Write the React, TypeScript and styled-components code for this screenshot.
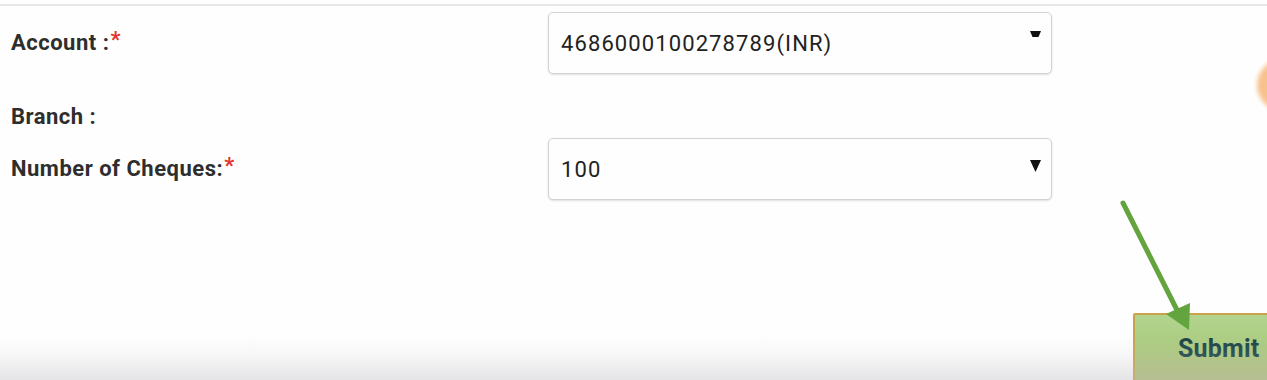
import React from "react";
import styled, { createGlobalStyle } from "styled-components";

const Global = createGlobalStyle`
  html, body { margin: 0; padding: 0; background: #fefefe; }
  body { font-family: Roboto, "Liberation Sans", Arial, sans-serif; }
`;

const Page = styled.div`
  position: relative;
  width: 1267px;
  height: 380px;
  overflow: hidden;
  background: #fefefe;
`;

const TopRule = styled.div`
  margin-top: 4px;
  height: 2px;
  background: #e7e7e9;
`;

const Form = styled.div`
  display: grid;
  grid-template-columns: 537px 504px;
  padding-left: 11px;
  margin-top: 6px;
`;

const Row = styled.div`
  display: contents;
`;

const Label = styled.div<{ $pad?: string }>`
  display: flex;
  align-items: center;
  font-size: 22px;
  letter-spacing: 0.5px;
  font-weight: 700;
  color: #2e2e2e;
  line-height: 22px;
  padding: ${(p) => p.$pad || "0"};
`;

const Star = styled.span`
  color: #e3342f;
  font-weight: 700;
  margin-left: 1px;
  position: relative;
  top: -3px;
`;

const Select = styled.div`
  position: relative;
  height: 62px;
  box-sizing: border-box;
  border: 1px solid #d2d2d4;
  border-radius: 5px;
  box-shadow: 0 1px 2px rgba(0, 0, 0, 0.12);
  background: #fefefe;
  display: flex;
  align-items: center;
  padding-left: 12px;
  font-size: 22px;
  letter-spacing: 1.1px;
  color: #222;
`;

const Caret = styled.svg<{ $top: number }>`
  position: absolute;
  right: 10px;
  top: ${(p) => p.$top}px;
`;

const Spacer = styled.div``;

const Footer = styled.div`
  display: flex;
  justify-content: flex-end;
  margin-top: 113px;
  margin-right: -30px;
`;

const SubmitButton = styled.button`
  width: 164px;
  height: 90px;
  box-sizing: border-box;
  border: 2px solid #caa24c;
  border-radius: 2px;
  background: linear-gradient(180deg, #b2d48e 0%, #abcb80 35%, #b5b66a 100%);
  color: #1b4447;
  font-family: Roboto, "Liberation Sans", Arial, sans-serif;
  font-size: 25px;
  font-weight: 700;
  letter-spacing: 0.2px;
  text-align: left;
  padding: 0 0 18px 43px;
  line-height: 30px;
  cursor: pointer;
`;

const Annotation = styled.svg`
  position: absolute;
  left: 0;
  top: 0;
  pointer-events: none;
`;

const OrangeBlob = styled.div`
  position: absolute;
  left: 1257px;
  top: 58px;
  width: 56px;
  height: 54px;
  border-radius: 50%;
  background: #f8c28c;
  filter: blur(2px);
`;

const BottomShade = styled.div`
  position: absolute;
  left: 0;
  right: 0;
  bottom: 0;
  height: 44px;
  background: linear-gradient(
    180deg,
    rgba(200, 200, 205, 0) 0%,
    rgba(200, 200, 205, 0.12) 40%,
    rgba(190, 190, 195, 0.4) 100%
  );
  pointer-events: none;
`;

export default function App() {
  return (
    <>
      <Global />
      <Page>
        <TopRule />
        <Form>
          <Row>
            <Label>
              Account :<Star>*</Star>
            </Label>
            <Select>
              4686000100278789(INR)
              <Caret $top={18} width="11" height="7" viewBox="0 0 11 7">
                <polygon points="0,0 11,0 8.5,6 2.5,6" fill="#111" />
              </Caret>
            </Select>
          </Row>
          <Row>
            <Label $pad="32px 0 10px">Branch :</Label>
            <Spacer />
          </Row>
          <Row>
            <Label>
              Number of Cheques:<Star>*</Star>
            </Label>
            <Select>
              100
              <Caret $top={21} width="11" height="12" viewBox="0 0 11 12">
                <polygon points="0,0 11,0 5.5,12" fill="#111" />
              </Caret>
            </Select>
          </Row>
        </Form>
        <Footer>
          <SubmitButton>Submit</SubmitButton>
        </Footer>
        <OrangeBlob />
        <BottomShade />
        <Annotation width="1267" height="380" viewBox="0 0 1267 380">
          <line
            x1="1123"
            y1="203"
            x2="1178"
            y2="312"
            stroke="#64a43e"
            strokeWidth="5"
            strokeLinecap="round"
          />
          <polygon points="1166,314 1190,303 1189,330" fill="#64a43e" />
        </Annotation>
      </Page>
    </>
  );
}
